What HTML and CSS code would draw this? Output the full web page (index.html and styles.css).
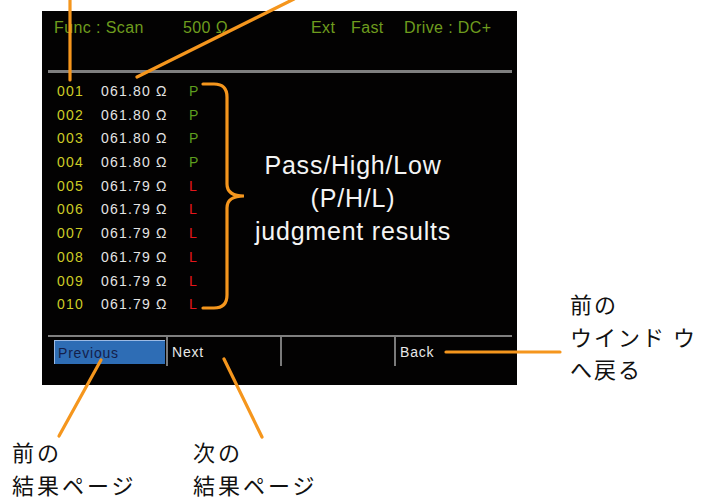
FILE: index.html
```html
<!DOCTYPE html>
<html lang="ja">
<head>
    <meta charset="UTF-8">
    <meta name="viewport" content="width=device-width, initial-scale=1.0">
    <title>Scan Results</title>
    <link rel="stylesheet" href="styles.css">
</head>
<body>
    <div class="page">
        <div class="top">
            <div class="screen">
                <div class="status">
                    <span class="st-func">Func : Scan</span>
                    <span class="st-range">500 Ω</span>
                    <span class="st-ext">Ext</span>
                    <span class="st-speed">Fast</span>
                    <span>Drive : DC+</span>
                </div>
                <div class="rule"></div>

                <div class="results">
                    <ul class="rows">
                        <li><span class="no">001</span><span class="val">061.80 Ω</span><span class="pass">P</span></li>
                        <li><span class="no">002</span><span class="val">061.80 Ω</span><span class="pass">P</span></li>
                        <li><span class="no">003</span><span class="val">061.80 Ω</span><span class="pass">P</span></li>
                        <li><span class="no">004</span><span class="val">061.80 Ω</span><span class="pass">P</span></li>
                        <li><span class="no">005</span><span class="val">061.79 Ω</span><span class="low">L</span></li>
                        <li><span class="no">006</span><span class="val">061.79 Ω</span><span class="low">L</span></li>
                        <li><span class="no">007</span><span class="val">061.79 Ω</span><span class="low">L</span></li>
                        <li><span class="no">008</span><span class="val">061.79 Ω</span><span class="low">L</span></li>
                        <li><span class="no">009</span><span class="val">061.79 Ω</span><span class="low">L</span></li>
                        <li><span class="no">010</span><span class="val">061.79 Ω</span><span class="low">L</span></li>
                    </ul>
                    <p class="judge-note">Pass/High/Low<br>(P/H/L)<br>judgment results</p>
                </div>

                <div class="rule rule-bottom"></div>
                <div class="softkeys">
                    <div class="key"><span class="key-on">Previous</span></div>
                    <div class="key">Next</div>
                    <div class="key"></div>
                    <div class="key key-last">Back</div>
                </div>
            </div>
            <p class="callout callout-back">前の<br>ウインド ウ<br>へ戻る</p>
        </div>

        <div class="bottom">
            <p class="callout callout-prev">前の<br>結果ページ</p>
            <p class="callout">次の<br>結果ページ</p>
        </div>

        <!-- leader lines and brace -->
        <svg class="leaders" width="703" height="498" viewBox="0 0 703 498">
            <g stroke="#f5961d" stroke-width="3.2" fill="none" stroke-linecap="round">
                <line x1="70" y1="-2" x2="70" y2="80"/>
                <line x1="294" y1="-1" x2="137" y2="77"/>
                <path d="M203 84 H214 Q227 84 227 97 V184 Q227 196 244 196 Q227 196 227 208 V295 Q227 308 214 308 H203"/>
                <line x1="446" y1="352" x2="560" y2="352"/>
                <line x1="101" y1="360" x2="59" y2="436"/>
                <line x1="224" y1="359" x2="262" y2="437"/>
            </g>
        </svg>
    </div>
</body>
</html>
```

FILE: styles.css
```css
body {
    margin: 0;
    background-color: #ffffff;
    font-family: "Liberation Sans", Arial, sans-serif;
}
.page {
    position: relative;
    width: 703px;
    height: 498px;
    overflow: hidden;
}
.top {
    display: flex;
    padding-top: 11px;
}
.screen {
    width: 475px;
    margin-left: 42px;
    background-color: #030202;
}
.status {
    display: flex;
    padding: 8px 0 0 12px;
    height: 17px;
    line-height: 17px;
    font-size: 16px;
    letter-spacing: 0.4px;
    color: #6e9c1e;
}
.st-func {
    width: 129px;
}
.st-range {
    width: 128px;
}
.st-ext {
    width: 40px;
}
.st-speed {
    width: 53px;
}
.rule {
    height: 3px;
    margin: 34px 5px 0 6px;
    background-color: #7f7f7f;
}
.rule-bottom {
    height: 2px;
    margin-top: 18px;
}
.results {
    display: flex;
    align-items: center;
    margin-top: 7px;
}
.rows {
    width: 155px;
    margin: 0;
    padding: 0 0 0 15px;
    list-style: none;
    font-size: 14px;
    letter-spacing: 1.2px;
}
.rows li {
    display: flex;
    height: 23.7px;
    line-height: 23.7px;
}
.no {
    width: 44px;
    color: #cccc26;
}
.val {
    width: 88px;
    color: #e4e4e4;
}
.pass {
    color: #5e9e1e;
}
.low {
    color: #e3161b;
}
.judge-note {
    width: 230px;
    margin: 0 0 0 26px;
    font-size: 25px;
    line-height: 33px;
    letter-spacing: 0.8px;
    color: #f4f4f4;
    text-align: center;
}
.softkeys {
    display: flex;
    padding-left: 12px;
    font-size: 14px;
    letter-spacing: 0.8px;
    color: #e8e8e8;
}
.key {
    width: 108px;
    height: 27px;
    padding: 2px 0 0 4px;
    line-height: 27px;
    border-right: 2px solid #7a7a7a;
}
.key:first-child {
    width: 112px;
    padding-left: 0;
}
.key-last {
    border-right: none;
}
.key-on {
    display: block;
    width: 107px;
    height: 23px;
    margin-top: 1px;
    padding-left: 3px;
    line-height: 24px;
    background-color: #2e6db5;
    border-top: 1px solid #9dbbe4;
    border-left: 1px solid #9dbbe4;
    color: #14204a;
}
.callout {
    margin: 0;
    font-family: "Noto Sans CJK JP", sans-serif;
    font-size: 22px;
    line-height: 33px;
    letter-spacing: 3px;
    color: #111111;
}
.callout-back {
    align-self: flex-start;
    margin: 276px 0 0 53px;
    line-height: 32.5px;
    letter-spacing: 2px;
}
.bottom {
    display: flex;
    margin-top: 50px;
    padding-left: 12px;
}
.callout-prev {
    width: 181px;
}
.leaders {
    position: absolute;
    top: 0;
    left: 0;
    pointer-events: none;
}
```
